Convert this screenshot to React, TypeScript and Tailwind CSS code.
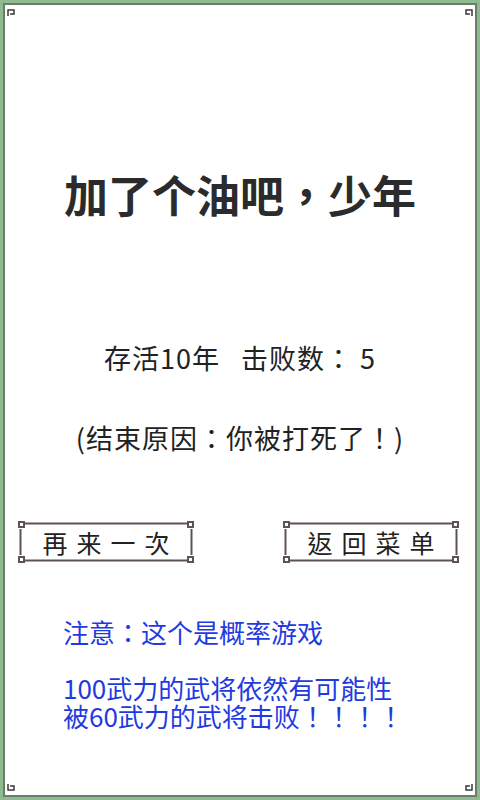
import React from 'react';

const cjk = { fontFamily: '"Noto Sans CJK TC", "Noto Sans CJK SC", "Noto Sans", sans-serif' };

function Corner({ className }: { className: string }) {
  return (
    <svg className={`absolute w-[10px] h-[10px] ${className}`} viewBox="0 0 10 10">
      <path d="M1 9V3h6v4H3" fill="none" stroke="#3a3a3a" strokeWidth="1.5" />
    </svg>
  );
}

function FrameButton({ label }: { label: string }) {
  return (
    <button className="relative w-[176px] h-[42px] flex items-center justify-center bg-white">
      <svg className="absolute inset-0 w-full h-full" viewBox="0 0 176 42" preserveAspectRatio="none">
        <g fill="none" stroke="#5e5353" strokeWidth="2">
          <path d="M7 2.5H169" />
          <path d="M7 39.5H169" />
          <path d="M2.5 8V34" />
          <path d="M173.5 8V34" />
          <rect x="1" y="1" width="5" height="5" />
          <rect x="170" y="1" width="5" height="5" />
          <rect x="1" y="36" width="5" height="5" />
          <rect x="170" y="36" width="5" height="5" />
        </g>
      </svg>
      <span className="relative text-[25px] leading-none tracking-[9px] pl-[9px] text-[#222]" style={cjk}>
        {label}
      </span>
    </button>
  );
}

export default function App() {
  return (
    <div className="w-[480px] h-[800px] bg-[#8dbb8d] p-[3px]" style={cjk}>
      <div className="relative h-full border-2 border-[#6f7a6f] bg-white">
        <Corner className="left-[2px] top-[2px]" />
        <Corner className="right-[2px] top-[2px] -scale-x-100" />
        <Corner className="left-[2px] bottom-[2px] -scale-y-100" />
        <Corner className="right-[2px] bottom-[2px] -scale-100" />

        <div className="flex flex-col items-center">
          <h1 className="mt-[161px] text-[44px] leading-[56px] font-bold text-[#2b2b2b]">加了个油吧，少年</h1>
          <p className="mt-[118px] text-[27px] leading-[36px] tracking-[1px] text-[#222] whitespace-pre">存活10年   击败数： 5</p>
          <p className="mt-[44px] text-[27px] leading-[36px] tracking-[1px] text-[#222]">(结束原因：你被打死了！)</p>
        </div>

        <div className="mt-[65px] flex justify-between pl-[13px] pr-[16px]">
          <FrameButton label="再来一次" />
          <FrameButton label="返回菜单" />
        </div>

        <div className="mt-[53px] pl-[58px] text-[26px] text-[#1f3be0]">
          <p className="leading-[32px]">注意：这个是概率游戏</p>
          <p className="mt-[26px] leading-[28px]">
            100武力的武将依然有可能性
            <br />
            被60武力的武将击败！！！！
          </p>
        </div>
      </div>
    </div>
  );
}
